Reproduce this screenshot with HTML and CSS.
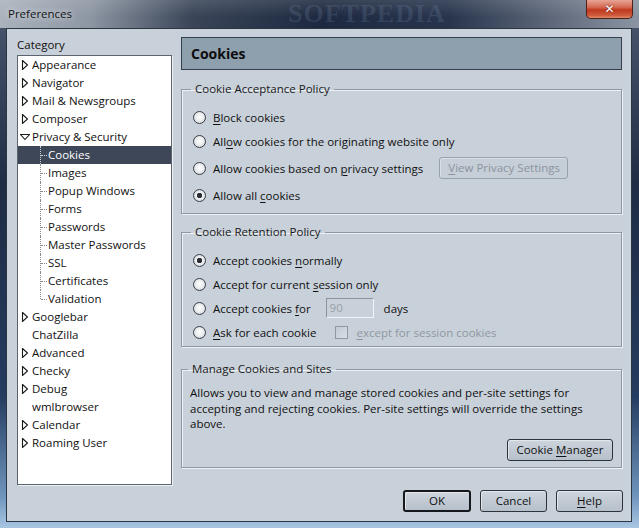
FILE: index.html
```html
<!DOCTYPE html>
<html>
<head>
    <title>Preferences</title>
    <link rel="stylesheet" href="styles.css">
</head>
<body>
    <div class="titlebar">
        <span class="title">Preferences</span>
        <span class="watermark">SOFTPEDIA</span>
        <div class="close">&#x2715;</div>
    </div>

    <div class="client">
        <div class="main">
            <div class="sidebar">
                <div class="caption">Category</div>
                <div class="tree">
                    <div class="row"><svg class="twisty" viewBox="0 0 10 10"><polygon points="2.5,0.5 7.5,5 2.5,9.5"/></svg>Appearance</div>
                    <div class="row"><svg class="twisty" viewBox="0 0 10 10"><polygon points="2.5,0.5 7.5,5 2.5,9.5"/></svg>Navigator</div>
                    <div class="row"><svg class="twisty" viewBox="0 0 10 10"><polygon points="2.5,0.5 7.5,5 2.5,9.5"/></svg>Mail &amp; Newsgroups</div>
                    <div class="row"><svg class="twisty" viewBox="0 0 10 10"><polygon points="2.5,0.5 7.5,5 2.5,9.5"/></svg>Composer</div>
                    <div class="row"><svg class="twisty" viewBox="0 0 10 10"><polygon points="0.5,2.5 9.5,2.5 5,7.5"/></svg>Privacy &amp; Security</div>
                    <div class="children">
                        <div class="row child selected">Cookies</div>
                        <div class="row child">Images</div>
                        <div class="row child">Popup Windows</div>
                        <div class="row child">Forms</div>
                        <div class="row child">Passwords</div>
                        <div class="row child">Master Passwords</div>
                        <div class="row child">SSL</div>
                        <div class="row child">Certificates</div>
                        <div class="row child">Validation</div>
                    </div>
                    <div class="row"><svg class="twisty" viewBox="0 0 10 10"><polygon points="2.5,0.5 7.5,5 2.5,9.5"/></svg>Googlebar</div>
                    <div class="row leaf">ChatZilla</div>
                    <div class="row"><svg class="twisty" viewBox="0 0 10 10"><polygon points="2.5,0.5 7.5,5 2.5,9.5"/></svg>Advanced</div>
                    <div class="row"><svg class="twisty" viewBox="0 0 10 10"><polygon points="2.5,0.5 7.5,5 2.5,9.5"/></svg>Checky</div>
                    <div class="row"><svg class="twisty" viewBox="0 0 10 10"><polygon points="2.5,0.5 7.5,5 2.5,9.5"/></svg>Debug</div>
                    <div class="row leaf">wmlbrowser</div>
                    <div class="row"><svg class="twisty" viewBox="0 0 10 10"><polygon points="2.5,0.5 7.5,5 2.5,9.5"/></svg>Calendar</div>
                    <div class="row"><svg class="twisty" viewBox="0 0 10 10"><polygon points="2.5,0.5 7.5,5 2.5,9.5"/></svg>Roaming User</div>
                </div>
            </div>

            <div class="panel">
                <div class="panel-header">Cookies</div>

                <fieldset class="group">
                    <legend>Cookie Acceptance Policy</legend>
                    <div class="option"><span class="radio"></span><span><u>B</u>lock cookies</span></div>
                    <div class="option"><span class="radio"></span><span>All<u>o</u>w cookies for the originating website only</span></div>
                    <div class="option tall"><span class="radio"></span><span>Allow cookies based on <u>p</u>rivacy settings</span>
                        <span class="button disabled privacy-btn"><u>V</u>iew Privacy Settings</span></div>
                    <div class="option"><span class="radio checked"></span><span>Allow all <u>c</u>ookies</span></div>
                </fieldset>

                <fieldset class="group retention">
                    <legend>Cookie Retention Policy</legend>
                    <div class="option"><span class="radio checked"></span><span>Accept cookies <u>n</u>ormally</span></div>
                    <div class="option"><span class="radio"></span><span>Accept for current <u>s</u>ession only</span></div>
                    <div class="option"><span class="radio"></span><span>Accept cookies <u>f</u>or</span>
                        <span class="days-input">90</span><span class="days">days</span></div>
                    <div class="option"><span class="radio"></span><span><u>A</u>sk for each cookie</span>
                        <span class="checkbox"></span><span class="muted"><u>e</u>xcept for session cookies</span></div>
                </fieldset>

                <fieldset class="group manage">
                    <legend>Manage Cookies and Sites</legend>
                    <p class="desc">Allows you to view and manage stored cookies and per-site settings for<br>
                        accepting and rejecting cookies. Per-site settings will override the settings<br>
                        above.</p>
                    <div class="manage-actions">
                        <span class="button manager-btn">Cookie <u>M</u>anager</span>
                    </div>
                </fieldset>
            </div>
        </div>

        <div class="dialog-buttons">
            <span class="button default">OK</span>
            <span class="button">Cancel</span>
            <span class="button"><u>H</u>elp</span>
        </div>
    </div>
</body>
</html>
```

FILE: styles.css
```css
html, body {
    margin: 0;
    padding: 0;
}
body {
    width: 639px;
    height: 528px;
    display: flex;
    flex-direction: column;
    overflow: hidden;
    font-family: "Open Sans", "Liberation Sans", sans-serif;
    font-size: 11.5px;
    color: #111;
    background: linear-gradient(to bottom, #4b586e 0%, #1f2c44 35%, #253c60 75%, #6f95bd 94%, #a9c6e2 100%);
}
u {
    text-decoration-thickness: 1px;
    text-underline-offset: 2px;
}

/* window title */
.titlebar {
    position: relative;
    height: 28px;
    flex-shrink: 0;
    display: flex;
    align-items: flex-start;
    background:
        linear-gradient(to bottom, rgba(255,255,255,0.12), rgba(255,255,255,0) 60%),
        linear-gradient(to right, #aab2bc 0%, #8d96a3 14%, #3a4558 30%, #1d2940 50%, #27344c 70%, #5d6779 86%, #8b94a2 100%);
}
.title {
    margin: 6px 0 0 8px;
    line-height: 16px;
    color: #141414;
    text-shadow: 0 0 6px rgba(230,235,240,0.9), 0 0 10px rgba(230,235,240,0.6);
}
.watermark {
    position: absolute;
    left: 288px;
    top: 0;
    line-height: 28px;
    font-family: "Liberation Serif", serif;
    font-size: 26px;
    font-weight: bold;
    letter-spacing: 1px;
    color: rgba(120,140,170,0.22);
}
.close {
    margin-left: auto;
    margin-right: 6px;
    width: 45px;
    height: 18px;
    border: 1px solid #4d2219;
    border-top: none;
    border-radius: 0 0 5px 5px;
    background: linear-gradient(to bottom, #e8a595 0%, #d36a52 40%, #c0391f 55%, #cd5a3c 85%, #e08a6a 100%);
    color: #fff;
    font-family: "DejaVu Sans", sans-serif;
    font-weight: bold;
    font-size: 12px;
    line-height: 18px;
    text-align: center;
    text-shadow: 0 0 2px #5a1a10;
}

/* client area */
.client {
    flex: 1;
    margin: 0 7px 6px 6px;
    border: 1px solid #2c3643;
    background: #c8d0d9;
    padding: 8px 9px 9px 10px;
    display: flex;
    flex-direction: column;
}
.main {
    flex: 1;
    display: flex;
    gap: 9px;
}
.sidebar {
    width: 155px;
    display: flex;
    flex-direction: column;
}
.caption {
    line-height: 16px;
    margin-bottom: 2px;
}
.tree {
    flex: 1;
    background: #fff;
    border: 1px solid #5b636d;
    box-shadow: 1px 1px 0 #eef1f4;
}
.row {
    position: relative;
    height: 18px;
    line-height: 18px;
    display: flex;
    align-items: center;
    white-space: nowrap;
}
.twisty {
    width: 10px;
    height: 10px;
    margin: 0 2px 0 2px;
}
.twisty polygon {
    fill: #fff;
    stroke: #1a1a1a;
    stroke-width: 1.1;
}
.leaf {
    padding-left: 14px;
}
.child {
    padding-left: 30px;
}
.child::before {
    content: "";
    position: absolute;
    left: 22px;
    top: 0;
    bottom: 0;
    border-left: 1px dotted #8a8a8a;
}
.child:last-child::before {
    bottom: 50%;
}
.child::after {
    content: "";
    position: absolute;
    left: 23px;
    top: 50%;
    width: 6px;
    border-top: 1px dotted #8a8a8a;
}
.selected {
    background: #3d4757;
    color: #fff;
}
.selected::before, .selected::after {
    border-color: #d0d4da;
}

/* right panel */
.panel {
    flex: 1;
    display: flex;
    flex-direction: column;
}
.panel-header {
    height: 33px;
    box-sizing: border-box;
    border: 1px solid #34404d;
    background: #8e9fae;
    font-weight: bold;
    font-size: 14px;
    line-height: 31px;
    padding-left: 9px;
    color: #0d0d0d;
}
.group {
    margin: 11px 0 0 0;
    padding: 8px 10px 6px 11px;
    border: 1px solid #8e98a3;
    box-shadow: inset 1px 1px 0 #eef1f4, 1px 1px 0 #eef1f4;
    min-width: 0;
}
.group legend {
    padding: 0 4px;
    margin-left: -2px;
    line-height: 16px;
    color: #1a1a1a;
}
.option {
    display: flex;
    align-items: center;
    height: 24px;
    white-space: nowrap;
}
.option.tall {
    height: 30px;
}
.radio {
    width: 11px;
    height: 11px;
    border: 1px solid #3b3f45;
    border-radius: 50%;
    margin-right: 7px;
    background: radial-gradient(circle at 50% 45%, #ffffff 0%, #eceef0 45%, #c3c8ce 100%);
}
.radio.checked {
    background: radial-gradient(circle, #2a2d31 0 2.4px, #f4f5f6 3px, #e4e7ea 55%, #c3c8ce 100%);
}
.button {
    display: inline-block;
    box-sizing: border-box;
    height: 22px;
    line-height: 20px;
    padding: 0 8px;
    text-align: center;
    border: 1px solid #2e3339;
    border-radius: 3px;
    background: linear-gradient(to bottom, #cdd4dc, #b6c0cb);
    box-shadow: inset 1px 1px 0 #e2e7ec;
    white-space: nowrap;
}
.button.disabled {
    color: #8b949e;
    border-color: #98a2ad;
    background: #c6ced7;
    box-shadow: inset 1px 1px 0 #d9dfe5;
}
.privacy-btn {
    margin-left: 16px;
    width: 129px;
}
.retention {
    margin-top: 10px;
    padding-bottom: 2px;
}
.days-input {
    box-sizing: border-box;
    width: 48px;
    height: 20px;
    margin-left: 15px;
    padding-left: 3px;
    line-height: 18px;
    color: #98a0a8;
    border: 1px solid #8c949c;
    border-right-color: #f2f4f6;
    border-bottom-color: #f2f4f6;
    background: #c8d0d9;
}
.days {
    margin-left: 10px;
}
.checkbox {
    width: 11px;
    height: 11px;
    margin: 0 8px 0 19px;
    border: 1px solid #8f98a2;
    background: linear-gradient(135deg, #c2cad3, #d9dee4);
}
.muted {
    color: #8f98a2;
}
.manage {
    margin-top: 14px;
    padding: 8px 8px 6px 8px;
}
.desc {
    margin: 0;
    line-height: 15.5px;
    white-space: nowrap;
}
.manage-actions {
    display: flex;
    justify-content: flex-end;
    margin-top: 7px;
}
.manager-btn {
    width: 106px;
}

/* bottom buttons */
.dialog-buttons {
    display: flex;
    justify-content: flex-end;
    gap: 9px;
    margin: 5px -1px 0 0;
}
.dialog-buttons .button {
    width: 67px;
}
.dialog-buttons .default {
    width: 68px;
    border: 2px solid #15181c;
    line-height: 18px;
}
```
